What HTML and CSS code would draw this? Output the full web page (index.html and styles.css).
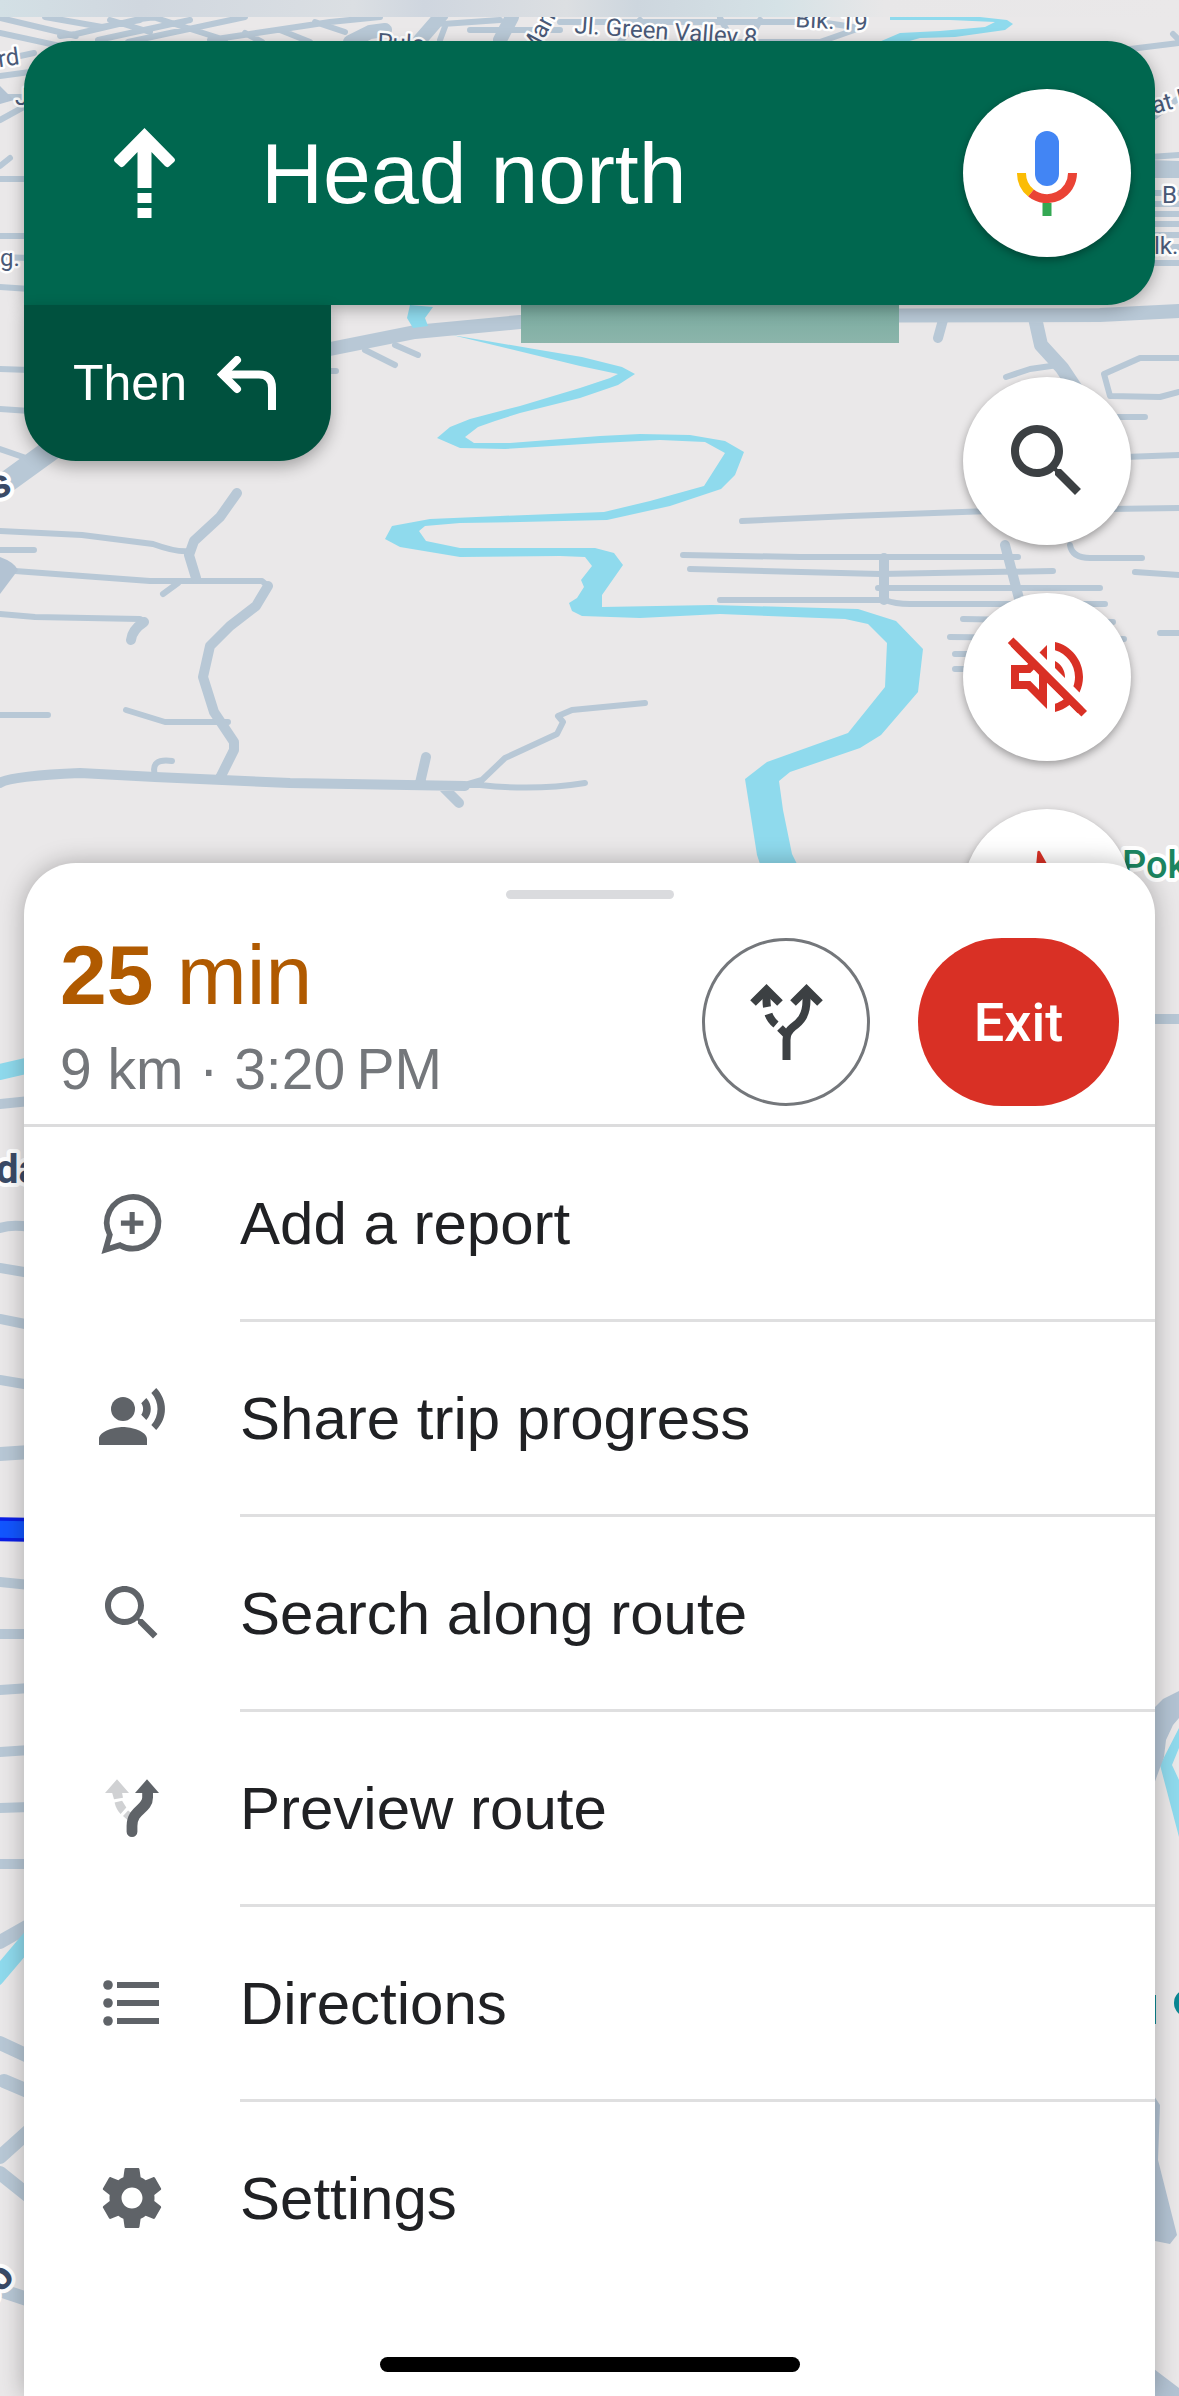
FILE: index.html
```html
<!DOCTYPE html>
<html lang="en">
<head>
<meta charset="utf-8">
<meta name="viewport" content="width=device-width, initial-scale=1">
<title>Navigation</title>
<link rel="stylesheet" href="styles.css">
</head>
<body>
<main class="screen">
  <svg class="map" viewBox="0 0 1179 2396" preserveAspectRatio="xMidYMin slice" aria-hidden="true">
    <defs>
      <linearGradient id="status" x1="0" x2="1" y1="0" y2="0">
        <stop offset="0" stop-color="#d3e0e5"/>
        <stop offset=".12" stop-color="#d0d7df"/>
        <stop offset=".3" stop-color="#dbdfe3"/>
        <stop offset=".36" stop-color="#cfd6df"/>
        <stop offset=".48" stop-color="#dcdfe2"/>
        <stop offset=".54" stop-color="#cdd6de"/>
        <stop offset=".66" stop-color="#d5e2e6"/>
        <stop offset=".75" stop-color="#e8e7e8"/>
        <stop offset="1" stop-color="#eae8e9"/>
      </linearGradient>
      <linearGradient id="sign" x1="0" x2="0" y1="0" y2="1">
        <stop offset="0" stop-color="#76a99d"/>
        <stop offset="1" stop-color="#8cb5ab"/>
      </linearGradient>
    </defs>

    <!-- streets behind the banner and the upper map -->
    <g class="road w6">
      <path d="M0 18L76 36M0 33L60 46M45 17L102 27L140 20M60 36L76 34L140 19L156 17M98 40L190 20M128 42L245 17M156 18L225 40M150 32L110 20M210 40L330 22L380 17M245 33L262 42M280 30L310 42M315 22L345 32M430 24L445 17M443 24L500 20M440 40L446 24M470 30H560M560 22H820L860 28L820 42H740M640 20L620 42M720 18L730 36M760 20L750 40"/>
      <path d="M0 76L30 72M20 56L34 53M0 120L40 98M8 97H24M0 166L10 158M0 179H30M0 236H30M0 257L30 258M0 287L30 289M0 369L30 370M0 409L30 411M0 449L26 458"/>
      <path d="M1130 49L1179 43M1173 34L1179 40M1150 120L1179 98"/>
      <path d="M1150 157L1179 155M1150 163L1179 164M1150 169L1179 170M1150 175H1179M1150 193H1179M1150 204H1179M1150 214H1179M1150 224H1179M1150 235H1179M1150 247H1179M1150 263H1179"/>
      <path d="M365 350L395 365M395 345L418 355M330 371H336"/>
      <path d="M1006 377L1030 369L1058 365M1179 358H1140L1104 374L1110 396L1160 397L1179 392M1110 417H1145M1125 457L1179 455"/>
      <path d="M742 521L850 516L990 511M1110 509L1179 508M683 555L800 557H1018M690 569L880 574L1053 571M720 600H885Q895 604 910 604H1105M878 588H1100M1070 545Q1072 558 1090 558H1142M1135 572L1179 575M963 619L1113 622M950 637L1124 639M955 654H1010M955 669H1010M1160 633H1179"/>
      <path d="M0 531L82 535L153 544Q178 553 190 551M0 550H34M15 571L150 581H262L268 586M178 583L163 594M0 614L35 617L140 619L144 622M0 715H48M126 710L165 722H228M155 775Q150 758 172 761M465 785H480Q535 791 585 783M465 785L482 780L505 758L557 734L563 722L558 716L572 710L645 703"/>
    </g>
    <g class="road w10">
      <path d="M943 320L938 338M884 558V600M1005 545L1022 610M237 493L220 517L194 541L189 555L196 578M268 586L256 606L230 626L210 646L203 677L214 712L234 742V750L220 778M144 622Q132 630 131 640M426 757L420 783M444 788L459 803M0 783Q10 776 80 773L155 777L290 783L465 786"/>
    </g>
    <g class="road w14">
      <path d="M320 351L415 332L520 322L700 316L1100 315L1179 311M1035 318L1041 345L1062 368L1082 398M350 42L370 32L385 30M420 40L440 17M500 40L512 17"/>
    </g>
    <path class="road w22" d="M-10 494L70 436"/>
    <path class="area-road" d="M0 557Q14 562 18 570L0 594ZM0 86L14 100L0 104Z"/>

    <!-- river -->
    <path class="water" d="M410 305L433 307L425 318L428 326L413 328L407 318ZM890 17H980L1007 20L1013 24L1005 30L955 37L920 38L885 48L865 48L900 33L940 31L985 27L995 22L950 20H890Z"/>
    <path class="water" d="M452 335L540 350L582 357L622 367L635 374L618 385L580 398L520 413L495 421L478 427L465 437L474 443L510 443L600 436L640 434L690 435L725 441L744 452L735 475L721 489L670 506L607 520L520 522L460 523L425 526L419 531L426 541L460 548H595L614 553L623 565L602 595V607L712 605L858 609L896 621L923 649L918 692L881 735L860 748L790 772L779 781L783 810L792 854L800 870H762L757 855L745 779L767 762L848 733L885 687L887 643L868 624L845 619L720 614L640 618L582 616L572 611L569 603L577 598L584 587L581 580L592 566L585 557L560 556L460 557L400 547L385 539L392 526L430 519L500 516L604 512L650 501L704 486L725 453L705 442L660 440L600 443L505 449L460 448L437 438L450 427L470 419L520 406L580 388L610 378L618 374L580 366Z"/>

    <!-- left edge beside the sheet -->
    <path class="stream w16" d="M0 1072L30 1065"/>
    <g class="road w10">
      <path d="M0 1104L30 1101M0 1228Q12 1224 30 1227M0 1268L30 1273M0 1319L30 1325M0 1380L30 1385M0 1582L30 1585M0 1634H30M0 1690L30 1688M0 1752L30 1750M0 1808L30 1807M0 1864H30"/>
    </g>
    <g class="road w14">
      <path d="M0 1454L30 1452M0 1942L30 1925M0 2043L30 2057M4 2081L30 2092M0 2157L30 2130M0 2173L30 2197M0 2290L30 2300"/>
    </g>
    <path class="stream w16" d="M-4 1978L30 1938"/>
    <path class="route-edge" d="M-10 1529L40 1530"/>
    <path class="route" d="M-10 1529L40 1530"/>

    <!-- right edge beside the sheet -->
    <path class="road w10" d="M1150 1019H1179"/>
    <path class="water" d="M1160 1765L1179 1728V1748L1172 1765L1179 1780V1837Z"/>
    <path class="area-road" d="M1150 1712L1163 1699L1179 1691V1718L1173 1725L1166 1740L1164 1757L1150 1795ZM1150 2090L1160 2105L1158 2160L1177 2235L1170 2244L1150 2240ZM1150 2366L1179 2388V2396H1150Z"/>
    <path class="transit" d="M1150 1995H1156V2024H1150Z"/>
    <circle class="transit" cx="1188" cy="2003" r="14"/>

    <rect x="521" y="300" width="378" height="43" fill="url(#sign)"/>

    <!-- place and street names -->
    <g class="label">
      <text x="377" y="50" transform="rotate(3 377 50)">Pulo</text>
      <text x="534" y="58" transform="rotate(-62 534 58)">Man</text>
      <text x="574" y="33" transform="rotate(4 574 33)">Jl. Green Valley 8</text>
      <text x="795" y="27" transform="rotate(3 795 27)">Blk. 19</text>
      <text x="-14" y="69" transform="rotate(-8 -14 69)">ard</text>
      <text x="15" y="105">J</text>
      <text x="0" y="266">g.</text>
      <text x="1154" y="114" transform="rotate(-16 1154 114)">at P</text>
      <text x="1162" y="203">B</text>
      <text x="1154" y="254">lk.</text>
    </g>
    <g class="label label-big">
      <text x="-6" y="500" transform="rotate(-20 -6 500)">s</text>
      <text x="-4" y="1183">da</text>
      <text x="-12" y="2310" transform="rotate(-50 -12 2310)">co</text>
    </g>
    <text class="label label-place" x="1122" y="878">Pok</text>

    <rect width="1179" height="17" fill="url(#status)"/>
  </svg>

  <header class="banner">
    <svg class="ahead" viewBox="0 0 61 90" aria-hidden="true">
      <path d="M30.500 0L60 30Q62 32 60 34L55 38.500Q53 40 51 38L37.500 24V60H23.500V24L10 38Q8 40 6 38.500L1 34Q-1 32 1 30ZM23.500 65H37.500V75H23.500ZM23.500 80H37.500V90H23.500Z"/>
    </svg>
    <h1 class="instruction">Head north</h1>
    <button class="fab" type="button" aria-label="Voice">
      <svg class="mic" viewBox="0 0 60 85" aria-hidden="true">
        <rect x="18" y="0" width="24" height="55" rx="12" fill="#4285f4"/>
        <path d="M4.500 42A25.500 25.500 0 0 0 14 62" fill="none" stroke="#fbbc04" stroke-width="9"/>
        <path d="M14 62A25.500 25.500 0 0 0 55.500 42" fill="none" stroke="#ea4335" stroke-width="9"/>
        <rect x="25.500" y="72" width="9" height="13" fill="#34a853"/>
      </svg>
    </button>
  </header>

  <div class="overlay">
    <div class="next">
      <span>Then</span>
      <svg class="turn" viewBox="0 0 60 54" aria-hidden="true">
        <path d="M20 4L5.500 18.500L20 33" stroke-linecap="round"/>
        <path d="M6 18.500H42Q55 18.500 55 32V54"/>
      </svg>
    </div>
    <div class="controls">
      <button class="fab" type="button" aria-label="Search">
        <svg class="glyph" viewBox="0 0 24 24" aria-hidden="true"><path d="M15.500 14h-.79l-.28-.27C15.410 12.590 16 11.110 16 9.500 16 5.910 13.090 3 9.500 3S3 5.910 3 9.500 5.910 16 9.500 16c1.610 0 3.090-.59 4.230-1.570l.27.28v.79l5 4.990L20.490 19l-4.990-5zm-6 0C7.010 14 5 11.990 5 9.500S7.010 5 9.500 5 14 7.010 14 9.500 11.990 14 9.500 14z"/></svg>
      </button>
      <button class="fab" type="button" aria-label="Unmute">
        <svg class="glyph glyph-red" viewBox="0 0 24 24" aria-hidden="true"><path d="M4.340 2.930L2.930 4.340 7.290 8.700 7 9H3v6h4l5 5v-6.590l4.180 4.180c-.65.49-1.380.88-2.180 1.110v2.060c1.340-.3 2.570-.92 3.610-1.750l2.050 2.050 1.410-1.410L4.340 2.930zM10 15.170L7.830 13H5v-2h2.830l.88-.88L10 11.410v3.760zM19 12c0 .82-.15 1.610-.41 2.340l1.530 1.530c.56-1.170.88-2.480.88-3.870 0-4.280-2.990-7.860-7-8.770v2.060c2.890.86 5 3.540 5 6.710zm-7-8l-1.880 1.880L12 7.760zm4.500 8c0-1.770-1.020-3.290-2.500-4.030v1.790l2.480 2.480c.01-.08.02-.16.02-.24z"/><path d="M2.200 3.500L3.600 2.100L22 20.500L20.600 21.900Z"/></svg>
      </button>
      <button class="fab" type="button" aria-label="Compass">
        <svg class="glyph glyph-red" viewBox="0 0 24 24" aria-hidden="true"><path d="M9.600 1.700Q9.900 1.200 10.300 1.700L15.500 11L8.500 13Z"/></svg>
      </button>
    </div>
  </div>

  <section class="sheet">
    <div class="handle"></div>
    <div class="summary">
      <div class="trip">
        <p class="eta"><b>25</b> min</p>
        <p class="details">9 km · 3:20&#8201;PM</p>
      </div>
      <button class="routes" type="button" aria-label="Alternate routes">
        <svg class="fork" viewBox="0 0 73 76" aria-hidden="true">
          <path d="M3 19L16.500 5.700L30 19M43 19L56.500 5.700L70 19"/>
          <path d="M56.500 8V16C56.500 32 50 38 43 43Q36.500 48 36.500 56V76M16.500 8V16Q16.500 20 17 23M18.500 30Q20.500 36 26 40.500M30 44L36 50"/>
        </svg>
      </button>
      <button class="exit" type="button">Exit</button>
    </div>
    <ul class="menu">
      <li class="item"><button class="row" type="button">
        <svg class="icon" viewBox="0 0 24 24" aria-hidden="true"><path d="M3.200 20.900L4.600 15.900A8.600 8.600 0 1 1 8 19.400Z" fill="none" stroke="currentColor" stroke-width="1.900"/><path d="M8.300 11.200H11.200V8.300H12.900V11.200H15.800V12.900H12.900V15.700H11.200V12.900H8.300Z"/></svg>
        <span>Add a report</span></button></li>
      <li class="item"><button class="row" type="button">
        <svg class="icon" viewBox="0 0 24 24" aria-hidden="true"><circle cx="9" cy="9" r="4"/><path d="M9 15c-2.670 0-8 1.340-8 4v2h16v-2c0-2.660-5.330-4-8-4zm7.760-9.640l-1.680 1.690c.84 1.180.84 2.710 0 3.890l1.680 1.690c2.020-2.020 2.020-5.070 0-7.270zM20.070 2l-1.630 1.630c2.770 3.020 2.770 7.560 0 10.740L20.070 16c3.900-3.890 3.910-9.950 0-14z"/></svg>
        <span>Share trip progress</span></button></li>
      <li class="item"><button class="row" type="button">
        <svg class="icon" viewBox="0 0 24 24" aria-hidden="true"><path d="M15.500 14h-.79l-.28-.27C15.410 12.590 16 11.110 16 9.500 16 5.910 13.090 3 9.500 3S3 5.910 3 9.500 5.910 16 9.500 16c1.610 0 3.090-.59 4.230-1.570l.27.28v.79l5 4.990L20.490 19l-4.990-5zm-6 0C7.010 14 5 11.990 5 9.500S7.010 5 9.500 5 14 7.010 14 9.500 11.990 14 9.500 14z"/></svg>
        <span>Search along route</span></button></li>
      <li class="item"><button class="row" type="button">
        <svg class="icon" viewBox="0 0 24 24" aria-hidden="true"><g fill="#d0d1d3"><path d="M7 2.400L11 7H8.700L9 8.600L6 9.100L5.400 7H3Z"/><path d="M6.200 10.200L8.700 9.600L10.100 11.800L8.200 14Q6.700 12.500 6.200 10.200Z"/><path d="M9 14.700L10.700 12.800L12 13.800L10.500 16Z"/></g><path d="M17 2.400L21 7H13Z"/><path d="M17.200 6.500V8.500C17.200 12.500 12 12.500 12 18V19.900" fill="none" stroke="currentColor" stroke-width="3.600" stroke-linecap="round"/></svg>
        <span>Preview route</span></button></li>
      <li class="item"><button class="row" type="button">
        <svg class="icon" viewBox="0 0 24 24" aria-hidden="true"><circle cx="4" cy="6" r="1.600"/><circle cx="4" cy="12" r="1.600"/><circle cx="4" cy="18" r="1.600"/><path d="M7 5H21V7H7ZM7 11H21V13H7ZM7 17H21V19H7Z"/></svg>
        <span>Directions</span></button></li>
      <li class="item"><button class="row" type="button">
        <svg class="icon" viewBox="0 0 24 24" aria-hidden="true"><path d="M19.430 12.980c.04-.32.07-.64.07-.98s-.03-.66-.07-.98l2.110-1.650c.19-.15.24-.42.12-.64l-2-3.460c-.12-.22-.39-.3-.61-.22l-2.490 1c-.52-.4-1.080-.73-1.690-.98l-.38-2.650C14.460 2.180 14.250 2 14 2h-4c-.25 0-.46.18-.49.42l-.38 2.650c-.61.25-1.170.59-1.690.98l-2.490-1c-.23-.09-.49 0-.61.22l-2 3.460c-.13.22-.07.49.12.64l2.110 1.650c-.04.32-.07.65-.07.98s.03.66.07.98l-2.110 1.650c-.19.15-.24.42-.12.64l2 3.460c.12.22.39.3.61.22l2.490-1c.52.4 1.080.73 1.690.98l.38 2.650c.03.24.24.42.49.42h4c.25 0 .46-.18.49-.42l.38-2.650c.61-.25 1.170-.59 1.690-.98l2.490 1c.23.09.49 0 .61-.22l2-3.460c.12-.22.07-.49-.12-.64l-2.110-1.650zM12 15.500c-1.930 0-3.500-1.570-3.500-3.500s1.570-3.500 3.500-3.500 3.500 1.570 3.500 3.500-1.570 3.500-3.500 3.500z"/></svg>
        <span>Settings</span></button></li>
    </ul>
    <div class="home-bar"></div>
  </section>
</main>
</body>
</html>
```
FILE: styles.css
```css
* {
  box-sizing: border-box;
}

body {
  margin: 0;
  font-family: "Liberation Sans", Arial, sans-serif;
  color: #202124;
  background: #eae8e9;
}

button {
  border: 0;
  padding: 0;
  font: inherit;
  color: inherit;
  background: none;
  cursor: pointer;
}

h1,
p,
ul {
  margin: 0;
  padding: 0;
}

svg {
  display: block;
  flex: none;
}

.screen {
  position: relative;
  display: flex;
  flex-direction: column;
  min-height: 100vh;
  padding: 41px 24px 0;
  overflow: hidden;
}

/* Map */

.map {
  position: absolute;
  inset: 0;
  width: 100%;
  height: 100%;
}

.road,
.stream,
.route,
.route-edge {
  fill: none;
  stroke-linecap: round;
  stroke-linejoin: round;
}

.road {
  stroke: #b8c8d6;
}

.stream {
  stroke: #8fdaed;
}

.w6 {
  stroke-width: 6px;
}

.w10 {
  stroke-width: 10px;
}

.w14 {
  stroke-width: 14px;
}

.w16 {
  stroke-width: 16px;
}

.w22 {
  stroke-width: 22px;
}

.route-edge {
  stroke: #0a1ee6;
  stroke-width: 24px;
}

.route {
  stroke: #1256ff;
  stroke-width: 17px;
}

.area-road {
  fill: #b3c3d3;
}

.water {
  fill: #8fdaed;
}

.transit {
  fill: #0b8793;
}

.label {
  font-family: Roboto, sans-serif;
  font-size: 24px;
  fill: #4a5a78;
  stroke: #fff;
  stroke-width: 5px;
  stroke-linejoin: round;
  paint-order: stroke;
}

.label-big {
  font-size: 40px;
  font-weight: 700;
  fill: #3a4a66;
  stroke-width: 8px;
}

.label-place {
  font-size: 38px;
  font-weight: 500;
  fill: #1b8560;
  stroke-width: 8px;
}

/* Turn banner */

.banner {
  position: relative;
  z-index: 1;
  display: flex;
  align-items: center;
  gap: 86px;
  height: 264px;
  padding: 0 24px 0 90px;
  border-radius: 48px 48px 48px 0;
  color: #fff;
  background: #00674f;
  box-shadow: 0 4px 16px rgba(0, 0, 0, 0.3);
}

.ahead {
  width: 61px;
  height: 90px;
  fill: currentColor;
}

.instruction {
  flex: 1;
  font-size: 86px;
  font-weight: 400;
  line-height: 96px;
}

.fab {
  display: flex;
  align-items: center;
  justify-content: center;
  flex: none;
  width: 168px;
  height: 168px;
  border-radius: 50%;
  background: #fff;
  box-shadow: 0 3px 8px rgba(0, 0, 0, 0.35);
}

.mic {
  width: 60px;
  height: 85px;
}

.overlay {
  position: relative;
  z-index: 1;
  display: flex;
  align-items: flex-start;
  justify-content: space-between;
}

.next {
  display: flex;
  align-items: center;
  gap: 30px;
  height: 156px;
  padding: 0 54px 0 49px;
  border-radius: 0 0 52px 52px;
  font-size: 50px;
  color: #fff;
  background: #00513e;
  box-shadow: 0 6px 16px rgba(0, 0, 0, 0.3);
}

.turn {
  width: 60px;
  height: 54px;
  fill: none;
  stroke: currentColor;
  stroke-width: 8px;
}

.controls {
  display: flex;
  flex-direction: column;
  gap: 48px;
  padding: 72px 24px 0 0;
}

.glyph {
  width: 96px;
  height: 96px;
  fill: #3c4043;
}

.glyph-red {
  fill: #d93025;
}

/* Bottom sheet */

.sheet {
  position: relative;
  z-index: 2;
  display: flex;
  flex: 1;
  flex-direction: column;
  margin-top: -114px;
  padding: 27px 0 24px;
  border-radius: 52px 52px 0 0;
  background: #fff;
  box-shadow: 0 0 24px rgba(0, 0, 0, 0.28);
}

.handle {
  align-self: center;
  width: 168px;
  height: 9px;
  border-radius: 5px;
  background: #dadbde;
}

.summary {
  display: flex;
  align-items: center;
  gap: 48px;
  margin-top: 39px;
  padding: 0 36px 18px;
  border-bottom: 3px solid #dcdcdd;
}

.trip {
  display: flex;
  flex: 1;
  flex-direction: column;
  gap: 22px;
  line-height: 72px;
}

.eta {
  font-size: 84px;
  color: #b05a00;
}

.details {
  font-size: 57px;
  color: #74777b;
}

.routes {
  display: flex;
  align-items: center;
  justify-content: center;
  width: 168px;
  height: 168px;
  border: 3px solid #74777b;
  border-radius: 50%;
}

.fork {
  width: 73px;
  height: 76px;
  fill: none;
  stroke: #3c4043;
  stroke-width: 8px;
}

.exit {
  width: 201px;
  height: 168px;
  border-radius: 84px;
  font-family: Roboto, sans-serif;
  font-size: 54px;
  font-weight: 500;
  color: #fff;
  background: #d93025;
}

.menu {
  list-style: none;
}

.item + .item::before {
  content: "";
  display: block;
  height: 3px;
  margin-left: 216px;
  background: #dfdfe0;
}

.row {
  display: flex;
  align-items: center;
  gap: 72px;
  width: 100%;
  height: 192px;
  padding-left: 72px;
  font-size: 60px;
  text-align: left;
}

.icon {
  width: 72px;
  height: 72px;
  fill: currentColor;
  color: #5f6368;
}

.home-bar {
  align-self: center;
  width: 420px;
  height: 15px;
  margin-top: auto;
  border-radius: 8px;
  background: #000;
}
```
